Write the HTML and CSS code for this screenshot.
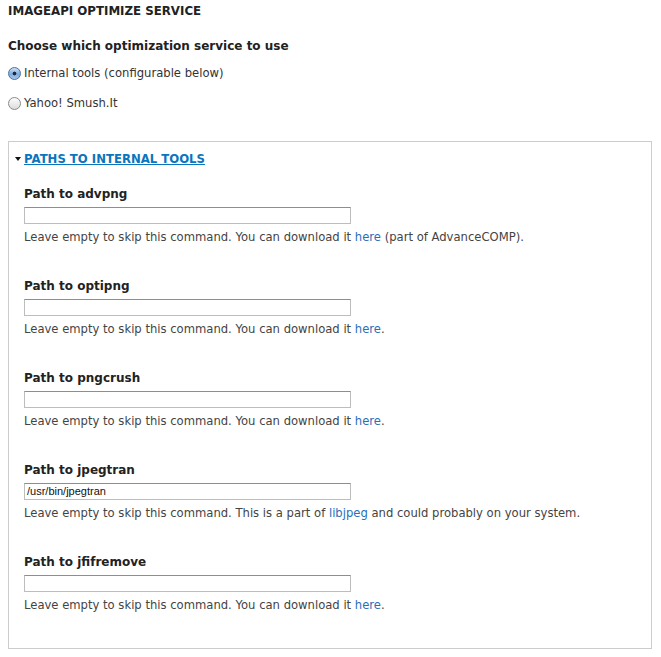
FILE: index.html
```html
<!DOCTYPE html>
<html>
<head>
<meta charset="utf-8">
<link rel="stylesheet" href="styles.css">
</head>
<body>
<div class="page">
  <h2 class="title">IMAGEAPI OPTIMIZE SERVICE</h2>
  <div class="group-label">Choose which optimization service to use</div>
  <label class="radio-row"><span class="radio checked"></span>Internal tools (configurable below)</label>
  <label class="radio-row"><span class="radio"></span>Yahoo! Smush.It</label>

  <div class="fieldset">
    <div class="legend"><span class="arrow"></span><a href="#" class="legend-link">PATHS TO INTERNAL TOOLS</a></div>

    <div class="item">
      <div class="label">Path to advpng</div>
      <div class="input"></div>
      <div class="desc">Leave empty to skip this command. You can download it <a href="#">here</a> (part of AdvanceCOMP).</div>
    </div>
    <div class="item">
      <div class="label">Path to optipng</div>
      <div class="input"></div>
      <div class="desc">Leave empty to skip this command. You can download it <a href="#">here</a>.</div>
    </div>
    <div class="item">
      <div class="label">Path to pngcrush</div>
      <div class="input"></div>
      <div class="desc">Leave empty to skip this command. You can download it <a href="#">here</a>.</div>
    </div>
    <div class="item">
      <div class="label">Path to jpegtran</div>
      <div class="input">/usr/bin/jpegtran</div>
      <div class="desc">Leave empty to skip this command. This is a part of <a href="#">libjpeg</a> and could probably on your system.</div>
    </div>
    <div class="item">
      <div class="label">Path to jfifremove</div>
      <div class="input"></div>
      <div class="desc">Leave empty to skip this command. You can download it <a href="#">here</a>.</div>
    </div>
  </div>
</div>
</body>
</html>
```

FILE: styles.css
```css
html, body {
  margin: 0;
  padding: 0;
  background: #fff;
}
.page {
  padding: 2px 9px 0 8px;
  font-family: "DejaVu Sans", Verdana, sans-serif;
  color: #333;
}
.title {
  margin: 0;
  font-size: 11.8px;
  line-height: 18px;
  font-weight: bold;
  color: #222;
}
.group-label {
  margin-top: 17px;
  font-size: 12px;
  line-height: 18px;
  font-weight: bold;
  color: #222;
}
.radio-row {
  display: flex;
  align-items: center;
  height: 18px;
  margin-top: 9px;
  font-size: 11.6px;
  color: #333;
}
.radio-row + .radio-row {
  margin-top: 12px;
}
.radio {
  box-sizing: border-box;
  width: 13px;
  height: 13px;
  border-radius: 50%;
  border: 1px solid #8a8a8a;
  background: linear-gradient(#fdfdfd, #dcdcdc);
  margin-right: 3px;
  flex: none;
}
.radio.checked {
  border-color: #4a6f9e;
  background: radial-gradient(circle at 50% 50%, #1c2a40 0, #1c2a40 1.6px, transparent 2.2px), linear-gradient(#cfe1f7, #7fa9db 55%, #a9c9ef);
}
.fieldset {
  margin-top: 29px;
  border: 1px solid #ccc;
  padding: 8px 16px 3px 15px;
}
.legend {
  display: flex;
  align-items: center;
  height: 18px;
  margin-bottom: 17px;
  margin-left: -9px;
}
.arrow {
  width: 0;
  height: 0;
  border-left: 3px solid transparent;
  border-right: 3px solid transparent;
  border-top: 4px solid #111;
  margin-right: 3px;
}
.legend-link {
  font-size: 11.7px;
  font-weight: bold;
  color: #0a74bd;
  text-decoration: underline;
}
.item {
  margin-bottom: 31px;
}
.label {
  font-size: 12px;
  line-height: 18px;
  font-weight: bold;
  color: #222;
  margin-bottom: 4px;
}
.input {
  box-sizing: border-box;
  width: 327px;
  height: 17px;
  border: 1px solid #bdbdbd;
  border-top-color: #8e8e8e;
  font-family: "Liberation Sans", Arial, sans-serif;
  font-size: 11px;
  line-height: 15px;
  padding: 0 2px;
  color: #111;
}
.desc {
  margin-top: 4px;
  font-size: 11.6px;
  line-height: 18px;
  color: #444;
}
.desc a {
  color: #2a6fb8;
  text-decoration: none;
}
```
